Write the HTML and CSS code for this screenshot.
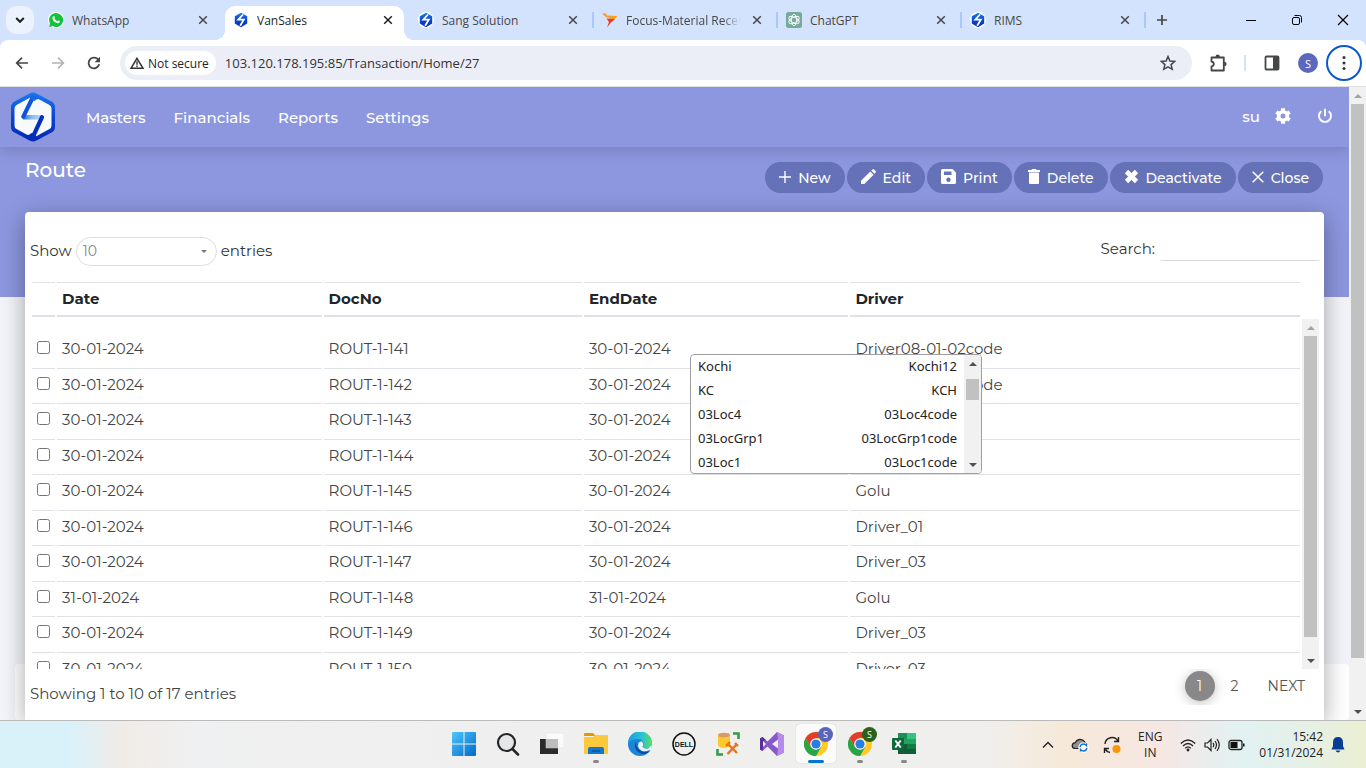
FILE: index.html
```html
<!DOCTYPE html>
<html lang="en">
<head>
<meta charset="utf-8">
<title>VanSales</title>
<link rel="stylesheet" href="styles.css">
</head>
<body>
<svg class="defs" aria-hidden="true">
  <defs>
    <linearGradient id="hexfill" x1="0" y1="0" x2="0" y2="1"><stop offset="0" stop-color="#1a7af0"/><stop offset="0.5" stop-color="#0b46d2"/><stop offset="1" stop-color="#0528b4"/></linearGradient>
    <linearGradient id="barfill" x1="0" y1="0" x2="1" y2="0"><stop offset="0" stop-color="#2c6fe0"/><stop offset="0.5" stop-color="#8ec0f5"/><stop offset="1" stop-color="#b9d8fa"/></linearGradient>
    <linearGradient id="winfill" x1="0" y1="0" x2="1" y2="1"><stop offset="0" stop-color="#4cc8fb"/><stop offset="1" stop-color="#0468c9"/></linearGradient>
    <linearGradient id="edgefill" x1="0" y1="0" x2="1" y2="0"><stop offset="0" stop-color="#1b9de2"/><stop offset="0.6" stop-color="#2cc4d0"/><stop offset="1" stop-color="#5be05c"/></linearGradient>
    <symbol id="logo" viewBox="0 0 46 50">
      <path d="M20 1.2q3-1.500 6 0l15.500 8.300q3.500 2 3.500 5.500v20q0 3.500-3.500 5.500L26 48.800q-3 1.500-6 0L4.500 40.500Q1 38.500 1 35V15q0-3.500 3.500-5.500z" fill="url(#hexfill)"/>
      <path d="M23 4 39.500 13q2 1 2 3.500v17q0 2.500-2 3.500L23 46 6.500 37q-2-1-2-3.500v-17q0-2.500 2-3.500z" fill="#f9fafc"/>
      <path d="M13 23h19l-2 4.500H13z" fill="url(#barfill)"/>
      <path d="M22.500 6 13.300 24.600" stroke="#0f55da" stroke-width="4.200" stroke-linecap="round"/>
      <path d="M32 25.200 23.300 44" stroke="#062fc0" stroke-width="4.200" stroke-linecap="round"/>
      <path d="M19 3.500h7.500L31 7.500q-4-1.500-6.500 1.500l-4-2z" fill="#1668e6"/>
      <path d="M27 46.500h-7.500L15 42.500q4 1.500 6.500-1.500l4 2z" fill="#052bb8"/>
    </symbol>
    <symbol id="favicon" viewBox="0 0 16 16">
      <circle cx="8" cy="8" r="8" fill="#fff"/>
      <path d="M8 .8 14.200 4.300v7.200L8 15.200 1.800 11.500V4.300z" fill="url(#hexfill)"/>
      <path d="M10 2.500 5.300 7.600h5.500L7.200 13.800" fill="none" stroke="#fff" stroke-width="1.800"/>
    </symbol>
    <symbol id="x" viewBox="0 0 10 10"><path d="M1.200 1.200 8.800 8.800M8.800 1.200 1.200 8.800" stroke="currentColor" stroke-width="1.500" fill="none"/></symbol>
    <symbol id="chrome" viewBox="0 0 24 24">
      <circle cx="12" cy="12" r="12" fill="#ffca28"/>
      <path d="M12 6h10.400A12 12 0 0 0 1.600 6L6.800 15z" fill="#e33b2e"/>
      <path d="M1.600 6A12 12 0 0 0 12 24l5.200-9L12 12 6.800 15z" fill="#27a348"/>
      <circle cx="12" cy="12" r="5.800" fill="#fff"/><circle cx="12" cy="12" r="4.600" fill="#277de8"/>
    </symbol>
  </defs>
</svg>

<header class="tabstrip">
  <button class="tab-search" aria-label="Search tabs"><svg width="10" height="8" viewBox="0 0 10 8"><path d="M1.200 2 5 5.800 8.800 2" fill="none" stroke="#1f1f1f" stroke-width="2"/></svg></button>
  <div class="tabs">
    <div class="tab">
      <svg class="fav" viewBox="0 0 16 16"><circle cx="8" cy="8" r="8" fill="#fff"/><path d="M8 1a7 7 0 1 1-3.300 13.100L1.200 15l.9-3.400A7 7 0 0 1 8 1z" fill="#14c23c"/><path d="M5.200 4.300q.9-.7 1.300.3l.4 1q.1.400-.5 1 .9 1.800 2.800 2.600.7-.9 1.100-.7l1.200.6q.5.300.1 1.100-.9 1.400-2.700.9-3.500-1-4.500-4.500-.2-1.400.8-2.300z" fill="#fff"/></svg>
      <span class="tab-title">WhatsApp</span><button class="tab-close" aria-label="Close tab"><svg width="10" height="10"><use href="#x"/></svg></button>
    </div>
    <div class="tab active"><svg class="fav"><use href="#favicon"/></svg><span class="tab-title">VanSales</span><button class="tab-close" aria-label="Close tab"><svg width="10" height="10"><use href="#x"/></svg></button></div>
    <div class="tab sep"><svg class="fav"><use href="#favicon"/></svg><span class="tab-title">Sang Solution</span><button class="tab-close" aria-label="Close tab"><svg width="10" height="10"><use href="#x"/></svg></button></div>
    <div class="tab sep"><svg class="fav" viewBox="0 0 16 16"><path d="M1 1l3.500.8L5 3.500 15.500 4 12 8 7.500 6 4.500 5.300 1.200 3z" fill="#f9a01e"/><path d="M4.500 6.500 13 7 8.500 11 5 15.500l2-5.500z" fill="#e8392a"/></svg><span class="tab-title fade">Focus-Material Receipt</span><button class="tab-close" aria-label="Close tab"><svg width="10" height="10"><use href="#x"/></svg></button></div>
    <div class="tab sep"><svg class="fav" viewBox="0 0 16 16"><rect width="16" height="16" rx="2.500" fill="#74aa9c"/><g fill="none" stroke="#fff" stroke-width=".9"><ellipse cx="8" cy="8" rx="2.700" ry="5.700"/><ellipse cx="8" cy="8" rx="2.700" ry="5.700" transform="rotate(60 8 8)"/><ellipse cx="8" cy="8" rx="2.700" ry="5.700" transform="rotate(120 8 8)"/></g></svg><span class="tab-title">ChatGPT</span><button class="tab-close" aria-label="Close tab"><svg width="10" height="10"><use href="#x"/></svg></button></div>
    <div class="tab sep"><svg class="fav"><use href="#favicon"/></svg><span class="tab-title">RIMS</span><button class="tab-close" aria-label="Close tab"><svg width="10" height="10"><use href="#x"/></svg></button></div>
    <button class="tab-new" aria-label="New tab"><svg width="12" height="12" viewBox="0 0 12 12"><path d="M6 1v10M1 6h10" stroke="#444746" stroke-width="1.700"/></svg></button>
  </div>
  <div class="window-controls">
    <button aria-label="Minimize"><svg width="12" height="12" viewBox="0 0 12 12"><path d="M1 6.500h10" stroke="#000"/></svg></button>
    <button aria-label="Restore"><svg width="12" height="12" viewBox="0 0 12 12" fill="none" stroke="#000"><rect x="1.500" y="3.500" width="7" height="7" rx="1.500"/><path d="M3.500 1.500h5q2 0 2 2v5"/></svg></button>
    <button aria-label="Close window"><svg width="12" height="12" viewBox="0 0 12 12"><path d="M1 1l10 10M11 1 1 11" stroke="#000" stroke-width="1.200"/></svg></button>
  </div>
</header>

<div class="toolbar-wrap">
  <div class="toolbar">
    <button class="tool" aria-label="Back"><svg width="14" height="14" viewBox="0 0 14 14" fill="none" stroke="#444746" stroke-width="1.700"><path d="M13 7H2M7 1.700 1.700 7 7 12.300"/></svg></button>
    <button class="tool" aria-label="Forward"><svg width="14" height="14" viewBox="0 0 14 14" fill="none" stroke="#b0b2b4" stroke-width="1.700"><path d="M1 7h11M7 1.700 12.300 7 7 12.300"/></svg></button>
    <button class="tool" aria-label="Reload"><svg width="14" height="14" viewBox="0 0 14 14"><path d="M12.200 8.300A5.400 5.400 0 1 1 11.500 4" fill="none" stroke="#444746" stroke-width="1.800"/><path d="M13 .8v5.400H7.600z" fill="#444746"/></svg></button>
    <div class="omnibox">
      <button class="site-info"><svg width="14" height="12" viewBox="0 0 14 12"><path d="M7 1.300 12.900 11.200H1.100z" fill="none" stroke="#333" stroke-width="1.500"/><path d="M7 4.300v3.500M7 8.600v1.300" stroke="#333" stroke-width="1.400"/></svg>Not secure</button>
      <input class="url" aria-label="Address" value="103.120.178.195:85/Transaction/Home/27">
      <button class="star" aria-label="Bookmark"><svg width="16" height="16" viewBox="0 0 16 16"><path d="M8 1.500 9.900 6l4.900.4-3.700 3.200 1.100 4.700L8 11.800l-4.200 2.500 1.100-4.700L1.200 6.400 6.100 6z" fill="none" stroke="#444746" stroke-width="1.500"/></svg></button>
    </div>
    <button class="tool ext" aria-label="Extensions"><svg width="18" height="18" viewBox="0 0 18 18"><path d="M2.500 3.500h12.300v13H2.500v-4.200q2.300-.3 2.300-2.300T2.500 7.700z" fill="none" stroke="#444746" stroke-width="1.800" stroke-linejoin="round"/><path d="M6.500 3q0-2.400 2.200-2.400T10.900 3zM15.200 7.700q2.400 0 2.400 2.300t-2.400 2.300z" fill="#444746"/></svg></button>
    <span class="tool-divider"></span>
    <button class="tool" aria-label="Side panel"><svg width="16" height="16" viewBox="0 0 16 16"><rect x="1.500" y="1.500" width="13" height="13" rx="1" fill="none" stroke="#444746" stroke-width="1.800"/><path d="M9 1h6v14H9z" fill="#444746"/></svg></button>
    <button class="avatar">S</button>
    <button class="menu" aria-label="Menu"><svg width="4" height="16" viewBox="0 0 4 16" fill="#333"><circle cx="2" cy="2.500" r="1.500"/><circle cx="2" cy="8" r="1.500"/><circle cx="2" cy="13.500" r="1.500"/></svg></button>
  </div>
</div>

<main class="viewport">
  <div class="page">
    <div class="page-footer"></div>
    <nav class="navbar">
      <svg class="logo"><use href="#logo"/></svg>
      <a href="#">Masters</a><a href="#">Financials</a><a href="#">Reports</a><a href="#">Settings</a>
      <div class="nav-user">
        <span>su</span>
        <button aria-label="User settings"><svg width="16" height="16" viewBox="0 0 16 16"><circle cx="8" cy="8" r="4.300" fill="none" stroke="#fff" stroke-width="3.600"/><path d="M8 .2v3M8 12.800v3M1.300 4.100l2.500 1.500M12.200 10.400l2.500 1.500M14.700 4.100l-2.500 1.500M3.800 10.400l-2.500 1.500" stroke="#fff" stroke-width="4"/></svg></button>
        <button aria-label="Log out"><svg width="16" height="16" viewBox="0 0 16 16"><path d="M4.300 3.200a6 6 0 1 0 7.400 0M8 .8v7.400" fill="none" stroke="#fff" stroke-width="1.900"/></svg></button>
      </div>
    </nav>
    <div class="title-bar">
      <h1>Route</h1>
      <div class="actions">
        <button><svg width="12" height="12" viewBox="0 0 12 12"><path d="M6 0v12M0 6h12" stroke="#fff" stroke-width="1.400"/></svg>New</button>
        <button><svg width="15" height="15" viewBox="0 0 15 15" fill="#fff"><path d="M0 15v-3.300L9.300 2.400l3.300 3.300L3.300 15zM10.300 1.600 11.500.4q.7-.6 1.400 0l1.700 1.700q.6.700 0 1.400l-1.200 1.200z"/></svg>Edit</button>
        <button><svg width="15" height="15" viewBox="0 0 15 15"><path d="M1.500 0h10L15 3.500v10q0 1.500-1.500 1.500h-12Q0 15 0 13.500v-12Q0 0 1.500 0z" fill="#fff"/><path d="M3 2.500h7.500v3.500H3z" fill="#6672b8"/><circle cx="7.500" cy="10.700" r="2.200" fill="#6672b8"/></svg>Print</button>
        <button><svg width="12" height="15" viewBox="0 0 12 15" fill="#fff"><path d="M0 1h3.500l.5-1h4l.5 1H12v2H0zM1 3.500h10V14q0 1-1 1H2q-1 0-1-1z"/></svg>Delete</button>
        <button><svg width="15" height="15" viewBox="0 0 15 15"><path d="M2.500 2.500l10 10M12.500 2.500l-10 10" stroke="#fff" stroke-width="4.600"/></svg>Deactivate</button>
        <button><svg width="12" height="12" viewBox="0 0 12 12"><path d="M.7.7l10.600 10.600M11.300.7.700 11.300" stroke="#fff" stroke-width="1.500"/></svg>Close</button>
      </div>
    </div>
    <section class="card">
      <div class="filters">
        <div class="length"><label for="len">Show</label><span class="select-wrap"><select id="len"><option>10</option></select></span><span>entries</span></div>
        <div class="search"><label for="q">Search:</label><input id="q" type="search"></div>
      </div>
      <div class="head-wrap">
        <table class="grid">
          <colgroup><col class="c-check"><col class="c-date"><col class="c-doc"><col class="c-date"><col></colgroup>
          <thead><tr><th></th><th>Date</th><th>DocNo</th><th>EndDate</th><th>Driver</th></tr></thead>
        </table>
      </div>
      <div class="body-wrap">
        <div class="body-scroll">
          <table class="grid rows">
            <colgroup><col class="c-check"><col class="c-date"><col class="c-doc"><col class="c-date"><col></colgroup>
            <tbody>
              <tr><td><input type="checkbox" aria-label="ROUT-1-141"></td><td>30-01-2024</td><td>ROUT-1-141</td><td>30-01-2024</td><td>Driver08-01-02code</td></tr>
              <tr><td><input type="checkbox" aria-label="ROUT-1-142"></td><td>30-01-2024</td><td>ROUT-1-142</td><td>30-01-2024</td><td>Driver08-01-02code</td></tr>
              <tr><td><input type="checkbox" aria-label="ROUT-1-143"></td><td>30-01-2024</td><td>ROUT-1-143</td><td>30-01-2024</td><td>Golu</td></tr>
              <tr><td><input type="checkbox" aria-label="ROUT-1-144"></td><td>30-01-2024</td><td>ROUT-1-144</td><td>30-01-2024</td><td>Golu</td></tr>
              <tr><td><input type="checkbox" aria-label="ROUT-1-145"></td><td>30-01-2024</td><td>ROUT-1-145</td><td>30-01-2024</td><td>Golu</td></tr>
              <tr><td><input type="checkbox" aria-label="ROUT-1-146"></td><td>30-01-2024</td><td>ROUT-1-146</td><td>30-01-2024</td><td>Driver_01</td></tr>
              <tr><td><input type="checkbox" aria-label="ROUT-1-147"></td><td>30-01-2024</td><td>ROUT-1-147</td><td>30-01-2024</td><td>Driver_03</td></tr>
              <tr><td><input type="checkbox" aria-label="ROUT-1-148"></td><td>31-01-2024</td><td>ROUT-1-148</td><td>31-01-2024</td><td>Golu</td></tr>
              <tr><td><input type="checkbox" aria-label="ROUT-1-149"></td><td>30-01-2024</td><td>ROUT-1-149</td><td>30-01-2024</td><td>Driver_03</td></tr>
              <tr><td><input type="checkbox" aria-label="ROUT-1-150"></td><td>30-01-2024</td><td>ROUT-1-150</td><td>30-01-2024</td><td>Driver_03</td></tr>
            </tbody>
          </table>
        </div>
        <div class="scrollbar"><i class="arrow up dim"></i><i class="thumb thumb-rows"></i><i class="arrow down"></i></div>
      </div>
      <div class="card-foot">
        <span>Showing 1 to 10 of 17 entries</span>
        <div class="pager"><button class="current">1</button><button>2</button><button class="next">NEXT</button></div>
      </div>
    </section>
    <div class="suggest">
      <ul>
        <li><span>Kochi</span><span>Kochi12</span></li>
        <li><span>KC</span><span>KCH</span></li>
        <li><span>03Loc4</span><span>03Loc4code</span></li>
        <li><span>03LocGrp1</span><span>03LocGrp1code</span></li>
        <li><span>03Loc1</span><span>03Loc1code</span></li>
      </ul>
      <div class="scrollbar"><i class="arrow up"></i><i class="thumb thumb-suggest"></i><i class="arrow down"></i></div>
    </div>
  </div>
  <div class="scrollbar"><i class="arrow up dim"></i><i class="thumb thumb-page"></i><i class="arrow down"></i></div>
</main>

<footer class="taskbar">
  <div class="apps">
    <button aria-label="Start"><svg width="24" height="24" viewBox="0 0 24 24" fill="url(#winfill)"><path d="M1 0h10.500v11.500H0V1q0-1 1-1zM12.500 0H23q1 0 1 1v10.500H12.500zM0 12.500h11.500V24H1q-1 0-1-1zM12.500 12.500H24V23q0 1-1 1H12.500z"/></svg></button>
    <button aria-label="Search"><svg width="24" height="24" viewBox="0 0 24 24"><circle cx="10.500" cy="10.500" r="8.500" fill="#e4e6e8" stroke="#262626" stroke-width="2.200"/><path d="M16.500 17 22 22.500" stroke="#262626" stroke-width="2.600" stroke-linecap="round"/></svg></button>
    <button aria-label="Task view"><svg width="24" height="24" viewBox="0 0 24 24"><path d="M0 7h18v15H0z" fill="#2b2b2b"/><path d="M6 1h18v15H6z" fill="#fafafa" stroke="#ddd" stroke-width=".5"/><path d="M6 7h12v9H6z" fill="#bdbdbd"/></svg></button>
    <button class="open" aria-label="File Explorer"><svg width="24" height="24" viewBox="0 0 24 24"><path d="M1 1h8l3 3H0V2q0-1 1-1z" fill="#e09a06"/><path d="M0 5h9l2-2h12q1 0 1 1v17q0 1-1 1H1q-1 0-1-1z" fill="#fcc93c"/><path d="M4 22v-5q0-2 2-2h12q2 0 2 2v5z" fill="#1477cf"/><path d="M8 19h8" stroke="#0b4f94" stroke-width="1.500"/></svg></button>
    <button aria-label="Edge"><svg width="24" height="24" viewBox="0 0 24 24"><circle cx="12" cy="12" r="12" fill="#1b86d6"/><path d="M0 11A12 12 0 0 1 24 11.500q0 5-5.500 5-4.500 0-4-2.500 1.500-1.500.5-4Q13.500 6.500 9 7 3 7.500 0 11z" fill="url(#edgefill)"/><path d="M8.500 9Q5.500 13 8 17.500q3 5 9.500 4.500 2.500-1 4.300-3-6.800 2.500-11-1.500Q7 13.500 8.500 9z" fill="#0c4aa3"/><path d="M14 9.500q2 3 .3 5.200 2 3 6 1.700l3.500-3.500-.3 4.600q-5 2.500-9.500 1.500-5-2.500-3.500-8 1-2 3.500-1.500z" fill="#eef2f4"/></svg></button>
    <button aria-label="Dell"><svg width="24" height="24" viewBox="0 0 24 24"><circle cx="12" cy="12" r="11" fill="none" stroke="#111" stroke-width="1.500"/><text x="12" y="15" text-anchor="middle" class="dell">DELL</text></svg></button>
    <button aria-label="Database tools"><svg width="24" height="24" viewBox="0 0 24 24"><path d="M2 3v11q6 4 12 0V3z" fill="#fcc92e"/><ellipse cx="8" cy="3" rx="6" ry="2.300" fill="#d9996b"/><path d="M17 1.500h5.500V7M1.500 17v5.500H7" fill="none" stroke="#329c46" stroke-width="2.600"/><path d="M12 12l9 9M21 12l-9.500 10M10 14l4-4M19 11l3 3" stroke="#f0700f" stroke-width="2.400"/></svg></button>
    <button aria-label="Visual Studio"><svg width="24" height="24" viewBox="0 0 24 24"><path d="M17 0 7.500 9.500 2.500 5 0 6.500v11L2.500 19l5-4.500L17 24l7-3.500v-17zM3 9l3 3-3 3zM18 7.500v9L12 12z" fill="#8557c7" fill-rule="evenodd"/><path d="M17 0l7 3.500v17L17 24l1-7V7z" fill="#b68ae8"/><path d="M0 6.500 2.500 5 6 8.200 3 9v6l-.5 4L0 17.500z" fill="#593096"/></svg></button>
    <button class="focused" aria-label="Chrome profile 1"><svg width="24" height="24"><use href="#chrome"/></svg><span class="badge">S</span></button>
    <button class="open" aria-label="Chrome profile 2"><svg width="24" height="24"><use href="#chrome"/></svg><span class="badge green">S</span></button>
    <button class="open" aria-label="Excel"><svg width="24" height="24" viewBox="0 0 24 24"><path d="M6 1h17q1 0 1 1v20H6z" fill="#21a366"/><path d="M6 1h9v6H6z" fill="#1b8f57"/><path d="M15 1h8q1 0 1 1v5h-9z" fill="#33c481"/><path d="M6 12h18v10H6z" fill="#135c38"/><path d="M15 12h9v5h-9z" fill="#107c41"/><rect y="6" width="12" height="12" rx="1" fill="#0b6b38"/><path d="M3.300 8.500 8.700 15.500M8.700 8.500 3.300 15.500" stroke="#fff" stroke-width="2"/></svg></button>
  </div>
  <div class="tray">
    <button aria-label="Hidden icons"><svg width="12" height="12" viewBox="0 0 12 12"><path d="M1 8.500l5-5 5 5" fill="none" stroke="#222" stroke-width="1.400"/></svg></button>
    <button aria-label="OneDrive"><svg width="18" height="16" viewBox="0 0 18 16"><path d="M4 11.500Q1 11 1.200 8.500 1.500 6 4.300 5.700 6 2 10 2.500q3.500.7 4.300 3.800 2.200 1 1.700 3.400L15 11.500z" fill="#919191" stroke="#222" stroke-width="1.200"/><circle cx="12.500" cy="10.500" r="5.200" fill="#fff"/><path d="M9 10q.8-3 3.500-3 1.800 0 3 1.500V6.500M16 11q-.8 3-3.500 3-1.800 0-3-1.500v2" fill="none" stroke="#1570cf" stroke-width="1.400"/></svg></button>
    <button aria-label="Update"><svg width="18" height="18" viewBox="0 0 18 18"><path d="M2 8a7 7 0 0 1 13-3M15.500 1v4.500H11M1.500 17v-4.500H6M2 13q2 3 5 3.500" fill="none" stroke="#222" stroke-width="1.400"/><circle cx="13.500" cy="13" r="4" fill="#fb9507"/></svg></button>
    <button class="lang"><span>ENG</span><span>IN</span></button>
    <button class="net" aria-label="Network"><svg width="16" height="14" viewBox="0 0 16 14" fill="none" stroke="#222" stroke-width="1.300"><path d="M.8 5.500q7.200-7 14.400 0M3 8q5-5 10 0M5.200 10.300q2.800-2.800 5.600 0"/><circle cx="8" cy="12" r=".8" fill="#222"/></svg></button>
    <button class="net" aria-label="Volume"><svg width="17" height="14" viewBox="0 0 17 14" fill="none" stroke="#222" stroke-width="1.200"><path d="M1 5v4h2.500L7 12.500v-11L3.500 5zM9 4.800q1.500 2.200 0 4.400M11 3q3 4 0 8M13 1.200q4.500 5.800 0 11.600"/></svg></button>
    <button class="net" aria-label="Battery"><svg width="17" height="12" viewBox="0 0 17 12"><rect x="1" y="1.500" width="13" height="9" rx="2" fill="none" stroke="#222" stroke-width="1.300"/><path d="M2.500 3h7v6h-7zM15 4.500h1.500v3H15z" fill="#111"/></svg></button>
    <button class="clock"><span>15:42</span><span>01/31/2024</span></button>
    <button aria-label="Notifications"><svg width="14" height="16" viewBox="0 0 14 16" fill="#083e91"><path d="M7 0q5 0 5 5.500V9l1.500 3.500h-13L2 9V5.500Q2 0 7 0zM4.500 13.500h5Q8.500 15.500 7 15.500t-2.500-2z"/></svg></button>
  </div>
</footer>
</body>
</html>
```

FILE: styles.css
```css
* { box-sizing: border-box; }
body {
  margin: 0;
  height: 100vh;
  display: flex;
  flex-direction: column;
  overflow: hidden;
  font-family: Montserrat, Inter, "Liberation Sans", sans-serif;
  font-size: 15px;
  color: #333;
}
button, input, select { font: inherit; color: inherit; }
button {
  border: 0;
  padding: 0;
  background: none;
  display: inline-flex;
  align-items: center;
  justify-content: center;
}
svg { display: block; flex: none; }
.defs { position: absolute; width: 0; height: 0; }

/* browser tabs */
.tabstrip, .toolbar, .taskbar { font-family: "Open Sans", "Noto Sans", sans-serif; font-size: 12px; }
.tabstrip {
  flex: none;
  display: flex;
  height: 40px;
  background: #d3e3fd;
}
.tab-search { width: 28px; height: 28px; margin: 6px; background: #edf3fe; border-radius: 10px; flex: none; }
.tabs { flex: 1; display: flex; align-items: stretch; min-width: 0; }
.tab {
  flex: 0 1 184px;
  min-width: 0;
  display: flex;
  align-items: center;
  gap: 8px;
  height: 40px;
  padding: 0 12px 0 8px;
  color: #474747;
  position: relative;
}
.fav { width: 16px; height: 16px; }
.tab-title { flex: 1; overflow: hidden; white-space: nowrap; }
.tab-title.fade { mask-image: linear-gradient(90deg, #000 85%, transparent); }
.tab-close { width: 18px; height: 18px; color: #474747; }
.tab.active {
  color: #1f1f1f;
  height: 34px;
  margin-top: 6px;
  padding-bottom: 6px;
  background: #fff;
  border-radius: 10px 10px 0 0;
  flex-basis: 179px;
  margin-left: 1px;
  margin-right: 6px;
  padding-right: 7px;
}
.tab.active .tab-close { color: #1f1f1f; }
.tab.active::before, .tab.active::after {
  content: "";
  position: absolute;
  bottom: 0;
  width: 10px;
  height: 10px;
}
.tab.active::before { left: -10px; background: radial-gradient(circle at 0 0, transparent 10px, #fff 10px); }
.tab.active::after { right: -10px; background: radial-gradient(circle at 100% 0, transparent 10px, #fff 10px); }
.tab.sep::after {
  content: "";
  position: absolute;
  right: 0;
  top: 12px;
  width: 2px;
  height: 16px;
  background: #a8c7fa;
}
.tab-new { width: 32px; height: 40px; }
.window-controls { display: flex; }
.window-controls button { width: 46px; height: 40px; }

/* browser toolbar */
.toolbar-wrap { flex: none; background: #d3e3fd; border-bottom: 1px solid #dcdfe4; }
.toolbar {
  display: flex;
  align-items: center;
  height: 46px;
  padding: 0 4px;
  background: #fff;
  border-radius: 8px 8px 0 0;
}
.tool { width: 36px; height: 34px; }
.omnibox {
  flex: 1;
  display: flex;
  align-items: center;
  height: 34px;
  margin-left: 8px;
  padding: 0 14px 0 5px;
  background: #ebeef7;
  border-radius: 17px;
}
.site-info { height: 24px; padding: 0 7px 0 5px; gap: 4px; background: #fff; border-radius: 12px; color: #1f1f1f; }
.url { flex: 1; min-width: 0; margin-left: 9px; padding: 0; border: 0; background: none; outline: 0; font-size: 13px; color: #333; }
.star { width: 20px; height: 20px; }
.ext { margin-left: 8px; }
.tool-divider { width: 2px; height: 16px; margin: 0 8px; background: #d3e3fd; }
.avatar { width: 20px; height: 20px; margin: 0 8px; border-radius: 50%; background: #5b68be; color: #fff; font-size: 11px; }
.menu { width: 36px; height: 36px; border: 2px solid #0b57d0; border-radius: 50%; }

/* page */
.viewport { flex: 1; min-height: 0; display: flex; }
.page {
  flex: 1;
  min-width: 0;
  position: relative;
  overflow: hidden;
  display: flex;
  flex-direction: column;
  background: linear-gradient(#8c97df 210px, #f4f5fa 210px);
}
.page-footer { position: absolute; left: 15px; right: 0; bottom: 0; height: 56px; background: #fff; border-radius: 4px; }
.navbar {
  flex: none;
  display: flex;
  align-items: center;
  gap: 28px;
  height: 60px;
  padding: 0 16px 0 10px;
  background: #8c97df;
  box-shadow: 0 4px 14px rgba(0, 0, 0, 0.15);
  color: #fff;
  font-weight: 500;
  position: relative;
}
.navbar a { color: #fff; text-decoration: none; }
.logo { width: 46px; height: 50px; margin-right: 2px; }
.nav-user { margin-left: auto; display: flex; align-items: center; padding-bottom: 2px; }
.nav-user button { margin-left: 15px; }
.nav-user button + button { margin-left: 26px; }
.title-bar {
  flex: none;
  display: flex;
  justify-content: space-between;
  align-items: center;
  height: 65px;
  padding: 0 26px 4px 25px;
}
h1 { margin: 0; padding-bottom: 16px; font-size: 20px; font-weight: 500; color: #fff; }
.actions { display: flex; gap: 2px; }
.actions button { height: 31px; padding: 0 14px; gap: 7px; border-radius: 16px; background: #6672b8; color: #fff; font-size: 14px; font-weight: 500; }
.actions svg { margin-bottom: 2px; }
.card {
  flex: 1;
  min-height: 0;
  display: flex;
  flex-direction: column;
  margin: 0 25px;
  padding: 20px 5px 0;
  background: #fff;
  border-radius: 4px 4px 0 0;
  box-shadow: 0 6px 24px rgba(0, 0, 0, 0.35);
  position: relative;
}
.filters { flex: none; display: flex; justify-content: space-between; height: 48px; }
.length, .search { display: flex; align-items: center; }
.length { gap: 4px; height: 36px; }
.select-wrap { position: relative; margin-top: 2px; }
.select-wrap::after {
  content: "";
  position: absolute;
  right: 10px;
  top: 13px;
  border: 3px solid transparent;
  border-top-color: #777;
  pointer-events: none;
}
select { appearance: none; width: 141px; height: 29px; padding: 0 6px; border: 1px solid #ddd; border-radius: 15px; background: #fff; color: #888; font-size: 14px; }
.search { gap: 6px; height: 32px; }
.search input { width: 158px; height: 26px; border: 0; border-bottom: 1px solid #d9dbdf; outline: 0; align-self: flex-end; padding: 0; margin-bottom: 3px; }
.head-wrap { flex: none; padding-right: 17px; }
.grid { width: 100%; table-layout: fixed; border-collapse: separate; border-spacing: 2px; }
.c-check { width: 23px; }
.c-date { width: 21%; }
.c-doc { width: 20.5%; }
.grid th { height: 35px; padding: 0 5px; border-top: 1px solid #dee2e6; border-bottom: 2px solid #dee2e6; line-height: 20px; text-align: left; font-weight: 700; color: #212529; }
.body-wrap { flex: none; display: flex; height: 350px; }
.body-scroll { flex: 1; min-width: 0; overflow: hidden; padding-top: 11px; }
.grid td { padding: 0 5px 1px; border-top: 1px solid #dee2e6; line-height: 20px; white-space: nowrap; color: #444; }
.rows tr { height: 33px; }
.rows tr:nth-child(odd) { height: 34px; }
.rows tr:first-child td { border-top-color: transparent; }
.rows input { display: block; width: 13px; height: 13px; margin: 0 0 3px; }
.card-foot { flex: none; display: flex; justify-content: space-between; align-items: flex-start; color: #444; }
.card-foot > span { padding-top: 15px; }
.pager { display: flex; padding: 2px 14px 4px 48px; gap: 5px; overflow: hidden; font-size: 14px; }
.pager button { width: 30px; height: 30px; border-radius: 15px; color: #555; }
.pager .current { background: #888; color: #fff; box-shadow: 0 2px 12px rgba(0, 0, 0, 0.25); }
.pager .next { width: auto; margin-left: 13px; }

/* scrollbars */
.scrollbar { flex: none; width: 17px; display: flex; flex-direction: column; align-items: center; background: #f1f1f1; }
.arrow { flex: none; width: 17px; height: 17px; display: flex; align-items: center; justify-content: center; }
.arrow::before { content: ""; border: 4px solid transparent; color: #505050; }
.arrow.dim::before { color: #a3a3a3; }
.arrow.up::before { border-top: 0; border-bottom-color: currentColor; }
.arrow.down::before { border-bottom: 0; border-top-color: currentColor; }
.arrow.down { margin-top: auto; }
.thumb { width: 13px; background: #c1c1c1; }
.thumb-page { height: 554px; }
.thumb-rows { height: 301px; }
.thumb-suggest { height: 21px; margin-top: 7px; }

/* suggestion list over the table */
.suggest {
  position: absolute;
  left: 690px;
  top: 267px;
  width: 292px;
  height: 120px;
  display: flex;
  overflow: hidden;
  border: 1px solid #a0a0a4;
  border-radius: 4px;
  background: #fff;
  font-family: "Noto Sans", "DejaVu Sans", sans-serif;
  font-size: 13px;
  color: #222;
}
.suggest ul { flex: 1; margin: 0; padding: 0; list-style: none; }
.suggest li { display: flex; justify-content: space-between; height: 24px; line-height: 22px; padding: 0 7px; }

/* taskbar */
.taskbar {
  flex: none;
  display: grid;
  grid-template-columns: 1fr auto 1fr;
  height: 48px;
  border-top: 1px solid #bbb;
  background: linear-gradient(90deg, #d9f2fa 0, #d9f2fa 5%, #f1ebe6 9%, #eff0f1 14%, #efefef 40%, #f0efee 72%, #f6e9d8 78%, #f6e7e4 85%, #e1f2f2 91%, #e5f0e8 95%, #ebf0d2 100%);
}
.apps { grid-column: 2; display: flex; gap: 4px; padding: 3px 0 4px 2px; }
.apps button { width: 40px; height: 39px; position: relative; border-radius: 4px; }
.apps .focused { background: #fbfbfb; box-shadow: 0 0 1px #aaa; }
.apps .open::after, .apps .focused::after { content: ""; position: absolute; bottom: 0; width: 6px; height: 3px; border-radius: 2px; background: #888; }
.apps .focused::after { width: 16px; background: #0475d1; }
.badge { position: absolute; right: 3px; top: 3px; width: 15px; height: 15px; border-radius: 50%; background: #5965bd; color: #fff; font-size: 9px; line-height: 15px; }
.badge.green { background: #2c611c; }
.dell { font: 700 7px "Liberation Sans", sans-serif; fill: #111; }
.tray { display: flex; justify-content: flex-end; align-items: center; padding-right: 21px; color: #222; }
.tray button { min-width: 32px; height: 40px; }
.tray .net { min-width: 24px; }
.tray .lang, .tray .clock { flex-direction: column; line-height: 16px; }
.tray .lang { width: 44px; margin-right: 4px; }
.tray .clock { align-items: flex-end; margin-left: 11px; }
.tray button:last-child { min-width: 14px; margin-left: 8px; }
```
